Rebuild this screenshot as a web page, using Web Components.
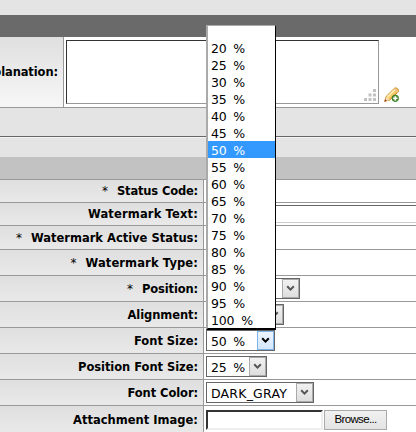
<!DOCTYPE html>
<html lang="en">
<head>
<meta charset="utf-8">
<title>Watermark settings</title>
<style>
html,body{margin:0;width:416px;height:432px;overflow:hidden;background:#e4e4e4}
body{font:12px "DejaVu Sans",sans-serif;color:#000}
</style>
</head>
<body>
<settings-page></settings-page>
<script>
const define = (name, html, ready) => customElements.define(name, class extends HTMLElement {
  constructor() {
    super();
    const t = document.createElement('template');
    t.innerHTML = html;
    this.attachShadow({mode: 'open'}).append(t.content.cloneNode(true));
  }
  connectedCallback() { if (ready) ready(this, this.shadowRoot); }
});

/* Text with an optional exact width, spread by letter spacing. */
define('fit-text', `<style>:host{display:inline-block;white-space:pre;line-height:1}span{display:inline-block}</style><span><slot></slot></span>`,
  (el, r) => {
    const w = +el.getAttribute('w'), s = r.querySelector('span'), n = el.textContent.length;
    if (w) s.style.letterSpacing = (w - s.getBoundingClientRect().width) / n + 'px';
  });

define('field-row', `<style>
:host{display:flex;box-sizing:border-box;border-bottom:1px solid #999;background:#fff;height:var(--h);flex:none}
.label{box-sizing:border-box;width:var(--lw,203px);flex:none;background:linear-gradient(#dfdfdf,var(--end,#e9e9e9));display:flex;justify-content:flex-end;align-items:center;padding:var(--pt,2px) 5px 0 0;font-weight:bold;font-size:11.5px;overflow:hidden;white-space:nowrap}
i{font-style:normal;font-weight:normal;font-size:12px;line-height:1;width:6px;margin:-2px 9px 0 0}
.field{border-left:1px solid #999;flex:1;padding-left:2px;display:flex;align-items:center;min-width:0}
</style><div class="label"></div><div class="field"><slot></slot></div>`,
  (el, r) => {
    const g = k => el.getAttribute(k);
    el.style.setProperty('--h', g('h') + 'px');
    r.querySelector('.label').innerHTML = (el.hasAttribute('required') ? '<i>*</i>' : '') + `<fit-text w="${g('w')}">${g('label')}</fit-text>`;
  });

define('select-box', `<style>
:host{display:flex;box-sizing:border-box;height:21px;border:1px solid #666;background:#fff;font-size:12.5px;align-items:center;justify-content:space-between;padding-left:4px;flex:none}
b{display:flex;align-items:center;justify-content:center;box-sizing:border-box;width:17px;height:19px;border:1px solid #aaa;background:linear-gradient(#f1f1f1,#dedede);color:#555}
:host([active]) b{border-color:#7eb4ea;background:linear-gradient(#ecf5fd,#d5e8fb);color:#000}
span{padding-top:1px;word-spacing:3px}
</style><span><slot></slot></span><b><svg width="9" height="7" viewBox="0 0 9 7"><path d="M1.2 1.2 4.5 4.6 7.8 1.2" fill="none" stroke="currentColor" stroke-width="2"/></svg></b>`,
  el => el.style.width = el.getAttribute('width') + 'px');

define('text-area', `<style>
:host{display:flex;box-sizing:border-box;width:313px;height:64px;border:1px solid #999;border-top-color:#333;border-left-color:#333;align-items:flex-end;justify-content:flex-end;background:#fff}
svg{display:block}
</style><svg width="14" height="14" fill="#c2c2c2"><path d="M9 0h3v3H9zM4.5 4.5h3v3h-3zM9 4.5h3v3H9zM0 9h3v3H0zM4.5 9h3v3h-3zM9 9h3v3H9z"/></svg>`);

define('edit-icon', `<style>:host{display:block;align-self:flex-end;margin:0 0 4px 5px}svg{display:block}</style>
<svg width="16" height="16" viewBox="0 0 16 16">
<path d="M.7 14.3 2.3 9.3 10.5 1.2q1.4-.9 3 .5t.9 3L6.2 12.9z" fill="#f7ce6c" stroke="#c98b31"/>
<path d="M3.5 9.7 11 2.4" stroke="#fff0b4" stroke-width="1.6"/><path d="M5.8 11.7 13 4.7" stroke="#e7a83f"/>
<path d="M10.3 1.5 13.9 5.2" stroke="#ecc394" stroke-width="1.5"/>
<path d="M2.4 9.8 5.8 13 .8 14.2z" fill="#f6dfb6"/><path d="M.3 14.7 1.2 12.2 2.9 13.8z" fill="#a33a18"/>
<circle cx="11.3" cy="11.3" r="3.2" fill="#5b9a43" stroke="#397d29"/><path d="M11.3 9.2v4.2M9.2 11.3h4.2" stroke="#fff" stroke-width="1.5"/></svg>`);

define('text-line', `<style>:host{display:block;flex:1;height:18px;box-sizing:border-box;border:1px solid #666;border-bottom-color:#ccc;border-right:0}</style>`);

define('file-picker', `<style>
:host{display:flex;gap:1px}
.path{box-sizing:border-box;width:117px;height:20px;border:2px solid #eee;border-top-color:#333;border-left-color:#333;background:#fff}
.btn{box-sizing:border-box;width:63px;height:20px;border:1px solid #aaa;background:linear-gradient(#f1f1f1,#e3e3e3);display:flex;align-items:center;justify-content:center;font:11.5px "Liberation Sans",sans-serif}
</style><div class="path"></div><div class="btn"><fit-text w="42">Browse...</fit-text></div>`);

define('option-list', `<style>
:host{position:absolute;left:206px;top:25px;width:70px;height:305px;box-sizing:border-box;border:2px solid #aaa;border-top-width:1px;border-right:1px solid #000;border-bottom:2px solid #000;background:#fff;font-size:12.5px;word-spacing:3px;padding-top:13px}
div{height:17px;display:flex;align-items:center;padding:4px 0 0 3px;box-sizing:border-box}
.on{background:#39f;color:#fff}
</style>`, (el, r) => {
  for (let v = 20; v <= 100; v += 5) {
    const d = document.createElement('div');
    if (v === 50) d.className = 'on';
    d.innerHTML = `<fit-text w="${v === 100 ? 42 : 34}">${v} %</fit-text>`;
    r.append(d);
  }
});

define('settings-page', `<style>
:host{display:flex;flex-direction:column;width:416px;height:432px;position:relative;overflow:hidden;background:#e4e4e4}
.top{height:15px}.bar{height:22px;background:#6a6a6a}
.gap{height:28px}.rule{height:1px;background:#666;border-bottom:1px solid #f4f4f4}
.sub{height:19px}.head{height:22px;background:#c2c2c2;border-bottom:1px solid #999}
.top,.bar,.gap,.rule,.sub,.head{flex:none}
</style>
<div class="top"></div><div class="bar"></div>
<field-row h="71" label="planation:" w="65" style="--lw:63px;--end:#f7f7f7;--pt:2px"><text-area></text-area><edit-icon></edit-icon></field-row>
<div class="gap"></div><div class="rule"></div><div class="sub"></div><div class="head"></div>
<field-row h="23" label="Status Code:" w="81" required></field-row>
<field-row h="23" label="Watermark Text:" w="110"><text-line></text-line></field-row>
<field-row h="24" label="Watermark Active Status:" w="167" required></field-row>
<field-row h="26" label="Watermark Type:" w="112.5" required></field-row>
<field-row h="26" label="Position:" w="56" required><select-box width="94"></select-box></field-row>
<field-row h="26" label="Alignment:" w="70.5"><select-box width="78"></select-box></field-row>
<field-row h="26" label="Font Size:" w="64"><select-box width="69" active><fit-text w="34">50 %</fit-text></select-box></field-row>
<field-row h="26" label="Position Font Size:" w="120"><select-box width="61"><fit-text w="34">25 %</fit-text></select-box></field-row>
<field-row h="26" label="Font Color:" w="70.5"><select-box width="108"><fit-text w="76">DARK_GRAY</fit-text></select-box></field-row>
<field-row h="28" label="Attachment Image:" w="125"><file-picker></file-picker></field-row>
<option-list></option-list>`);
</script>
</body>
</html>
